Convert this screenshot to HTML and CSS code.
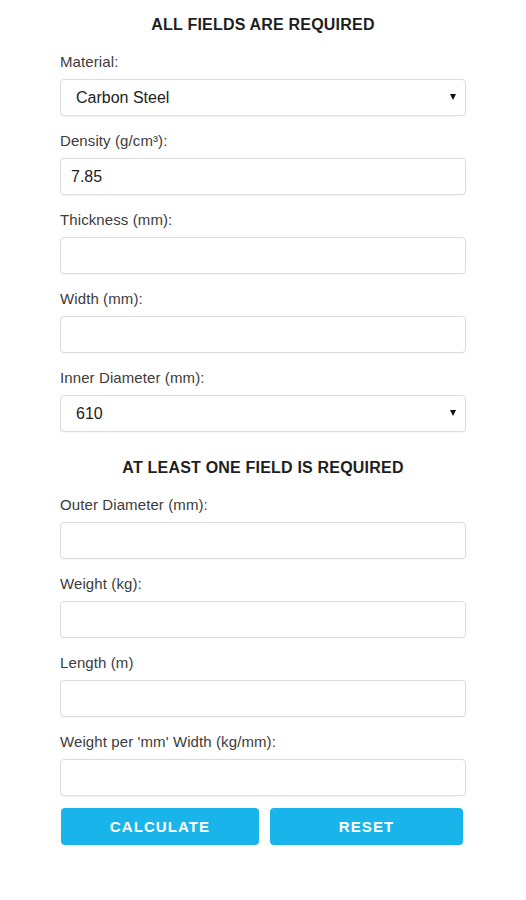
FILE: index.html
```html
<!DOCTYPE html>
<html>
<head>
<meta charset="utf-8">
<link rel="stylesheet" href="styles.css">
</head>
<body>
<form class="calc">
  <h2 class="section-title">ALL FIELDS ARE REQUIRED</h2>
  <div class="field">
    <label class="field-label">Material:</label>
    <div class="select-wrap">
      <select class="control select"><option>Carbon Steel</option></select>
    </div>
  </div>
  <div class="field">
    <label class="field-label">Density (g/cm³):</label>
    <input class="control input" type="text" value="7.85">
  </div>
  <div class="field">
    <label class="field-label">Thickness (mm):</label>
    <input class="control input" type="text">
  </div>
  <div class="field">
    <label class="field-label">Width (mm):</label>
    <input class="control input" type="text">
  </div>
  <div class="field">
    <label class="field-label">Inner Diameter (mm):</label>
    <div class="select-wrap">
      <select class="control select"><option>610</option></select>
    </div>
  </div>
  <h2 class="section-title second">AT LEAST ONE FIELD IS REQUIRED</h2>
  <div class="field">
    <label class="field-label">Outer Diameter (mm):</label>
    <input class="control input" type="text">
  </div>
  <div class="field">
    <label class="field-label">Weight (kg):</label>
    <input class="control input" type="text">
  </div>
  <div class="field">
    <label class="field-label">Length (m)</label>
    <input class="control input" type="text">
  </div>
  <div class="field last">
    <label class="field-label">Weight per 'mm' Width (kg/mm):</label>
    <input class="control input" type="text">
  </div>
  <div class="actions">
    <button type="button" class="btn">CALCULATE</button>
    <button type="button" class="btn">RESET</button>
  </div>
</form>
</body>
</html>
```
FILE: styles.css
```css
html, body {
  margin: 0;
  padding: 0;
  background: #ffffff;
}
body {
  font-family: "Liberation Sans", Arial, sans-serif;
  color: #333;
}
.calc {
  width: 406px;
  margin: 0 auto;
  padding-top: 16px;
  display: flex;
  flex-direction: column;
}
.section-title {
  margin: 0 0 19px 0;
  font-size: 16px;
  line-height: 18px;
  font-weight: bold;
  text-align: center;
  color: #1e1e1e;
  letter-spacing: 0.2px;
}
.section-title.second {
  margin-top: 11px;
}
.field {
  display: flex;
  flex-direction: column;
  margin-bottom: 16px;
}
.field.last {
  margin-bottom: 12px;
}
.field-label {
  font-size: 15px;
  line-height: 17px;
  color: #3c3c3c;
  margin-bottom: 9px;
  letter-spacing: 0.1px;
}
.control {
  box-sizing: border-box;
  width: 100%;
  height: 37px;
  border: 1px solid #dcdcdc;
  border-radius: 4px;
  background: #fff;
  font-family: "Liberation Sans", Arial, sans-serif;
  font-size: 16px;
  color: #222;
  margin: 0;
  outline: none;
  box-shadow: 0 1px 1px rgba(0,0,0,0.04);
}
.input {
  padding: 0 10px;
}
.select-wrap {
  position: relative;
}
.select {
  -webkit-appearance: none;
  appearance: none;
  padding: 0 30px 0 15px;
}
.select-wrap::after {
  content: "";
  position: absolute;
  right: 10px;
  top: 15px;
  width: 0;
  height: 0;
  border-left: 3.5px solid transparent;
  border-right: 3.5px solid transparent;
  border-top: 6px solid #111;
  pointer-events: none;
}
.actions {
  display: grid;
  grid-template-columns: 198fr 193fr;
  column-gap: 11px;
  padding: 0 3px 0 1px;
}
.btn {
  height: 37px;
  border: none;
  border-radius: 4px;
  background: #19b4ea;
  color: #fff;
  font-family: "Liberation Sans", Arial, sans-serif;
  font-size: 15px;
  font-weight: bold;
  letter-spacing: 1.1px;
  padding: 0;
  margin: 0;
}
```
